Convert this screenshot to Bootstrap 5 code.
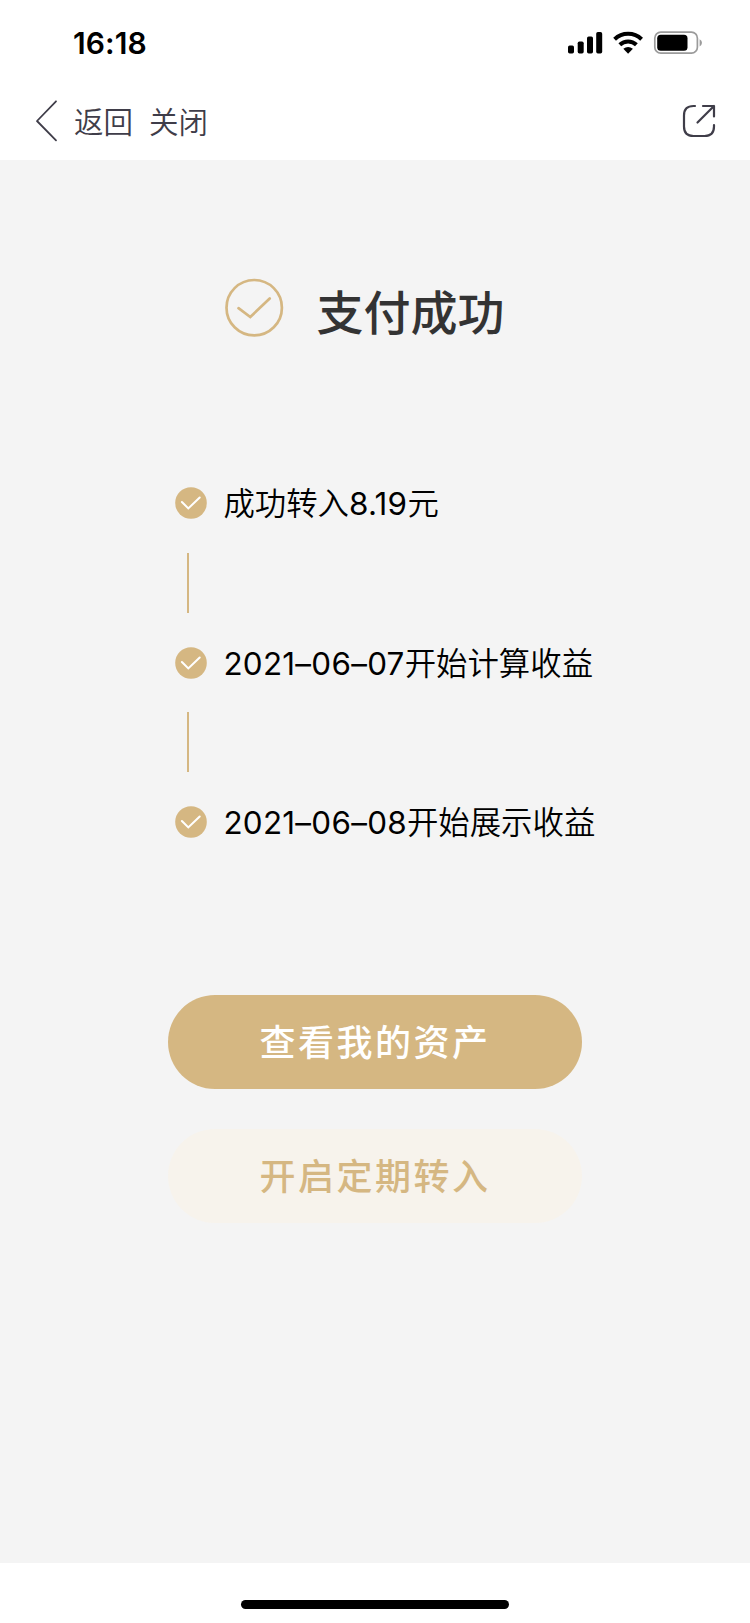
<!DOCTYPE html>
<html lang="zh-CN">
<head>
<meta charset="utf-8">
<meta name="viewport" content="width=device-width, initial-scale=1">
<title>支付成功</title>
<link rel="stylesheet" href="https://cdn.jsdelivr.net/npm/bootstrap@5.3.0/dist/css/bootstrap.min.css">
<style>
  body { font-family: Inter, "Noto Sans CJK SC", sans-serif; background: #fff; height: 1623px; overflow: hidden; }
  svg { display: block; flex: none; }
  .status-bar { height: 86px; padding: 0 47px 0 73px; }
  .clock { font-size: 30px; font-weight: 600; line-height: 86px; letter-spacing: .1px; color: #000; }
  .top-nav { height: 74px; padding: 0 34px 4px 35px; color: #3f3d49; }
  .top-nav a { color: inherit; font-size: 29.5px; font-weight: 350; line-height: 44px; padding-top: 1px; }
  .stage { background: #f4f4f4; height: 1403px; }
  .result { padding: 117px 0 0 225px; gap: 31.5px; }
  .result h1 { font-size: 47px; font-weight: 500; line-height: 60px; color: #333; margin-top: 6px; }
  .steps { padding: 140px 0 0 175.4px; }
  .step { height: 40px; gap: 16px; font-size: 31.4px; font-weight: 350; line-height: 40px; color: #000; }
  .step > span { padding-top: 2px; }
  .date { font-weight: 400; letter-spacing: .28px; }
  .link-line { width: 2px; height: 60px; margin: 29.5px 0 30px 12px; background: #d5b782; }
  .actions { padding-top: 153px; gap: 40px; }
  .pill { --bs-btn-border-width: 0; width: 414px; height: 94px; font-size: 36px; font-weight: 500; letter-spacing: 2.5px; padding: 2px 0 0; }
  .pill-gold, .pill-gold:hover { background: #d5b782; color: #fff; }
  .pill-pale, .pill-pale:hover { background: #f7f3ec; color: #d5b782; }
  .home-zone { height: 60px; padding-top: 37px; }
  .home-bar { width: 268px; height: 9px; background: #000; }
</style>
</head>
<body class="d-flex flex-column">
<svg width="0" height="0" class="position-absolute">
  <symbol id="tick" viewBox="0 0 32 32">
    <circle cx="16" cy="16" r="15.8" fill="#d5b782"/>
    <path d="M6.900 15 13.300 21.400 24.700 10.500" fill="none" stroke="#fff" stroke-width="2.1" stroke-linecap="round"/>
  </symbol>
</svg>
<header>
  <div class="status-bar d-flex align-items-center justify-content-between">
    <span class="clock">16:18</span>
    <svg width="135" height="24" viewBox="0 0 135 24">
      <rect x="0" y="14.5" width="6" height="8" rx="1.7"/>
      <rect x="9.700" y="10.5" width="6" height="12" rx="1.7"/>
      <rect x="19" y="5.5" width="6" height="17" rx="1.7"/>
      <rect x="28.200" y="1" width="6" height="21.5" rx="1.7"/>
      <g fill="none" stroke="#000" stroke-width="4">
        <path d="M46.6 8.2a19.5 19.5 0 0 1 27 0"/>
        <path d="M51.8 13.8a12 12 0 0 1 16.6 0"/>
      </g>
      <path d="M55.3 17.8q4.8-3.6 9.6 0L60.1 22.8z"/>
      <rect x="86.8" y="1.2" width="42.6" height="21" rx="6" fill="none" stroke="#9b9b9b" stroke-width="1.7"/>
      <rect x="89.200" y="3.8" width="30.3" height="16" rx="3.5"/>
      <path d="M131.6 8.2q2.4 1.3 2.4 3.6t-2.4 3.6z" fill="#9b9b9b"/>
    </svg>
  </div>
  <nav class="top-nav d-flex align-items-center">
    <svg width="23" height="42" viewBox="0 0 23 42" fill="none" stroke="currentColor" stroke-width="1.8" stroke-linejoin="round" stroke-linecap="round"><path d="M21 1.3 2 21 21 40.3"/></svg>
    <a href="#" class="text-decoration-none ms-3">返回</a>
    <a href="#" class="text-decoration-none ms-3">关闭</a>
    <svg class="ms-auto" width="34" height="34" viewBox="0 0 34 34" fill="none" stroke="currentColor" stroke-width="2.2" stroke-linecap="round" stroke-linejoin="round">
      <path d="M13 2h-1.5Q2 2 2 11.500v11Q2 32 11.500 32h11Q32 32 32 22.500V21"/><path d="M21 2h11v10.500M32 2 15.500 18.500"/>
    </svg>
  </nav>
</header>
<main class="stage">
  <div class="result d-flex align-items-start">
    <svg width="60" height="60" viewBox="0 0 60 60" fill="none" stroke="#d5b782" stroke-width="2.7" stroke-linecap="round"><circle cx="29.200" cy="30.700" r="27.700"/><path d="M13.500 31.200 25.300 40 44.700 21.500"/></svg>
    <h1 class="mb-0">支付成功</h1>
  </div>
  <div class="steps">
    <div class="step d-flex align-items-center"><svg width="32" height="32"><use href="#tick"/></svg><span>成功转入<span class="date">8.19</span>元</span></div>
    <div class="link-line"></div>
    <div class="step d-flex align-items-center"><svg width="32" height="32"><use href="#tick"/></svg><span><span class="date">2021–06–07</span>开始计算收益</span></div>
    <div class="link-line"></div>
    <div class="step d-flex align-items-center"><svg width="32" height="32"><use href="#tick"/></svg><span><span class="date">2021–06–08</span>开始展示收益</span></div>
  </div>
  <div class="actions d-flex flex-column align-items-center">
    <button type="button" class="btn pill pill-gold rounded-pill">查看我的资产</button>
    <button type="button" class="btn pill pill-pale rounded-pill">开启定期转入</button>
  </div>
</main>
<footer class="home-zone d-flex justify-content-center"><div class="home-bar rounded-pill"></div></footer>
<script src="https://cdn.jsdelivr.net/npm/bootstrap@5.3.0/dist/js/bootstrap.bundle.min.js"></script>
</body>
</html>
